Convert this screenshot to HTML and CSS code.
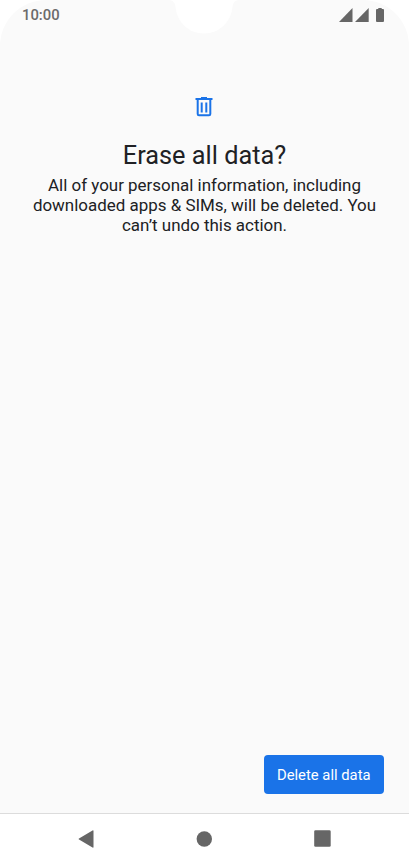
FILE: index.html
```html
<!DOCTYPE html>
<html lang="en">
<head>
  <meta charset="utf-8">
  <title>Erase all data?</title>
  <link rel="stylesheet" href="styles.css">
</head>
<body>
  <div class="screen">
    <svg class="notch" width="68" height="34" viewBox="0 0 68 34">
      <path d="M0 0C3.500 1 5 3 5.500 7C7 22 18.500 33.500 34 33.500S61 22 62.500 7C63 3 64.500 1 68 0Z"/>
    </svg>
    <header class="status-bar">
      <span class="clock">10:00</span>
      <svg class="status-icons" width="46" height="14" viewBox="0 0 46 14">
        <path d="M0 14L13.500 0V14Z"/>
        <path d="M16 14L29.700 0V14Z"/>
        <path d="M39.300 0h3.400v1h1.300q1 0 1 1v11q0 1-1 1h-6q-1 0-1-1V2q0-1 1-1h1.300Z"/>
      </svg>
    </header>

    <main class="content">
      <svg class="trash-icon" width="19" height="20" viewBox="0 0 19 20">
        <path class="trash-lid" d="M6 0h6v1h5.500v2H.500V1H6Z"/>
        <path class="trash-body" d="M2.700 2.500V17q0 1.300 1.300 1.300h10q1.300 0 1.300-1.300V2.500"/>
        <path class="trash-lid" d="M5.700 5.500h2v10h-2ZM10.300 5.500h2v10h-2Z"/>
      </svg>
      <h1 class="title">Erase all data?</h1>
      <p class="description">All of your personal information, including downloaded apps &amp; SIMs, will be deleted. You can’t undo this action.</p>
    </main>

    <footer class="actions">
      <button class="delete-button">Delete all data</button>
    </footer>
  </div>

  <nav class="nav-bar">
    <svg width="16" height="18" viewBox="0 0 16 18">
      <path d="M14.500.500Q15.500 0 15.500 1V17Q15.500 18 14.500 17.500L1 9.500Q0 9 1 8.500Z"/>
    </svg>
    <svg width="16" height="16" viewBox="0 0 16 16">
      <circle cx="8.300" cy="8" r="7.700"/>
    </svg>
    <svg width="17" height="17" viewBox="0 0 17 17">
      <rect x="0.200" y="0.200" width="16.500" height="16.500" rx="1.300"/>
    </svg>
  </nav>
</body>
</html>
```

FILE: styles.css
```css
* {
  margin: 0;
  padding: 0;
  box-sizing: border-box;
}

html, body {
  width: 100%;
  height: 100%;
  overflow: hidden;
}

body {
  display: flex;
  flex-direction: column;
  background: #fff;
  color: #202124;
  font-family: Roboto, sans-serif;
}

.screen {
  position: relative;
  flex: 1;
  display: flex;
  flex-direction: column;
  background: #fafafa;
  border-radius: 46px 46px 0 0;
}

/* Camera cutout, lies over the status bar */
.notch {
  position: absolute;
  top: 0;
  left: 170px;
  fill: #fff;
}

.status-bar {
  display: flex;
  justify-content: space-between;
  align-items: center;
  height: 30px;
  padding: 0 24px 0 22px;
}

.clock {
  font-size: 14.8px;
  font-weight: 500;
  line-height: 30px;
  color: #6b6b6b;
}

.status-icons {
  fill: #666;
}

.content {
  flex: 1;
  display: flex;
  flex-direction: column;
  align-items: center;
  padding: 67px 24px 0;
  text-align: center;
}

.trash-icon {
  fill: #1a73e8;
}

.trash-body {
  fill: none;
  stroke: #1a73e8;
  stroke-width: 2;
}

.title {
  margin-top: 23px;
  font-size: 25.3px;
  font-weight: 400;
  line-height: 32px;
}

.description {
  margin-top: 3px;
  font-size: 16.95px;
  line-height: 20px;
}

.actions {
  display: flex;
  justify-content: flex-end;
  padding: 0 25.5px 19.5px;
}

.delete-button {
  width: 119.5px;
  height: 38.5px;
  padding-top: 1px;
  border: none;
  border-radius: 4px;
  background: #1a73e8;
  color: #fff;
  font-family: inherit;
  font-size: 14.8px;
}

.nav-bar {
  display: flex;
  justify-content: space-between;
  align-items: center;
  height: 51px;
  padding: 0 78px 1px;
  border-top: 1px solid #dcdcdc;
  fill: #666;
}
```
